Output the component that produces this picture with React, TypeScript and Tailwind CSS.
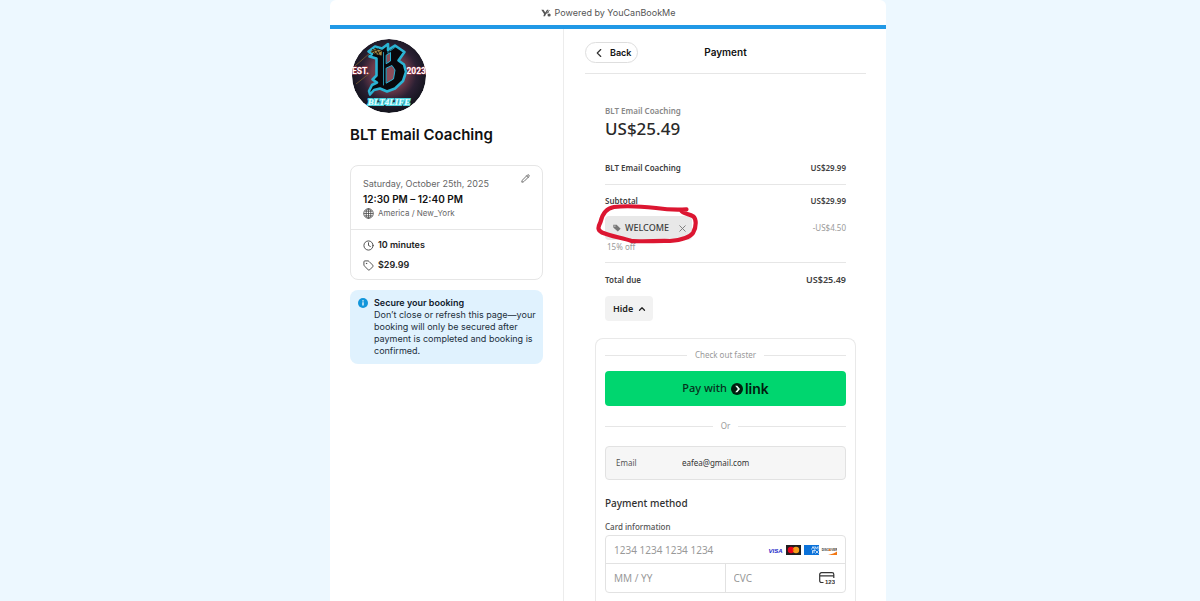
import type { ReactNode } from "react";
import { ChevronLeft, ChevronUp, Clock, Pencil, Tag, X } from "lucide-react";

// Booking page, payment step: the booking summary on the left, the checkout
// form on the right.

const BOOKING = {
  title: "BLT Email Coaching",
  date: "Saturday, October 25th, 2025",
  time: "12:30 PM – 12:40 PM",
  zone: "America / New_York",
  length: "10 minutes",
  price: "$29.99",
};

function BrandMark() {
  return (
    <svg viewBox="0 0 10 8" className="h-2 w-2.5" aria-hidden="true">
      <path d="M.3.8h2.200L4.300 3.600 6 .8h1.500L4.800 5.500 4 7.200H2.300l.8-2.200z" fill="#555" />
      <path d="M6.300 3.600 8.500 1M5.500 4.500 8 2.800" stroke="#555" strokeWidth=".9" />
      <circle cx="8.100" cy="6" r="1.600" fill="#555" />
    </svg>
  );
}

function Logo() {
  return (
    <svg viewBox="0 0 74 74" className="size-[74px] rounded-full" role="img" aria-label="BLT4LIFE">
      <defs>
        <radialGradient id="glow" cx="50%" cy="46%" r="52%">
          <stop offset="0%" stopColor="#8d4a58" />
          <stop offset="45%" stopColor="#6b3a4a" />
          <stop offset="72%" stopColor="#2b2033" />
          <stop offset="100%" stopColor="#15151f" />
        </radialGradient>
      </defs>
      <circle cx="37" cy="37" r="37" fill="url(#glow)" />
      <path d="M3 27 18 14M4 45 18 34" stroke="#6a5230" strokeWidth="1" />
      <g strokeLinejoin="round" strokeLinecap="round">
        <path
          d="M16.500 12.500 23 7.500 30 9.500 36 5V11L43 6.500 52.500 13 46.500 21.500 52 25.500 54 33 51 42 43 49.500 35 52.500 28 49.500 22 51 18 55.500 17 52 20 46 25 43.500 20.500 40.500 24.500 36.500V19.500L17.500 17.500 20 15z"
          fill="#08080c"
          stroke="#2bb3d3"
          strokeWidth="2.600"
        />
        <path
          d="M34.500 16 38.500 13.500V22L34.500 24.500zM34.500 29 40 26.500 43 31 41.500 40 34.500 44z"
          fill="#8a4d59"
          stroke="#2bb3d3"
          strokeWidth="1"
        />
        <path d="M31.500 13.500V46M36 6 36 14M38 12 43.500 8" stroke="#2bb3d3" strokeWidth=".8" fill="none" />
        <path d="M18.500 12.500 23.500 9.500 30 12 29.500 16.500 23 15z" fill="#a88b43" />
        <path d="m20.500 10.500 4 5.500m-1-7 4 7.500m-8-3.500 7-3m-4 5 7-3" stroke="#17130e" strokeWidth=".9" />
      </g>
      <g
        fontFamily="Roboto, 'Liberation Sans', sans-serif"
        fontWeight="700"
        fontSize="8.500"
        fill="#fff"
        stroke="#b84359"
        strokeWidth=".8"
        paintOrder="stroke"
      >
        <text x="0" y="34.500">EST.</text>
        <text x="74" y="34.500" textAnchor="end">2023</text>
      </g>
      <text
        x="37"
        y="65.500"
        textAnchor="middle"
        fontFamily="'Liberation Serif', serif"
        fontStyle="italic"
        fontWeight="700"
        fontSize="9"
        fill="#e6fdff"
        stroke="#4bd4df"
        strokeWidth="2"
        paintOrder="stroke"
      >
        BLT4LIFE
      </text>
    </svg>
  );
}

function GlobeIcon() {
  return (
    <svg
      viewBox="0 0 11 11"
      className="size-[11px]"
      fill="none"
      stroke="#4a4a4a"
      strokeWidth=".8"
      aria-hidden="true"
    >
      <circle cx="5.500" cy="5.500" r="4.800" />
      <ellipse cx="5.500" cy="5.500" rx="2.300" ry="4.800" />
      <path d="M5.500.7v9.600M.7 5.500h9.600M1.500 3.200h8M1.500 7.800h8" />
    </svg>
  );
}

function Summary() {
  return (
    <aside className="w-[234px] shrink-0 border-r border-[#ececec] px-5 pt-2.5">
      <div className="pl-0.5">
        <Logo />
      </div>
      <h1 className="mt-3 text-[15px] leading-5 font-semibold text-[#111]">{BOOKING.title}</h1>

      <section className="mt-5 rounded-lg border border-[#e6e6e6]">
        <div className="relative border-b border-[#e6e6e6] px-3 pt-3 pb-2.5">
          <p className="text-[9px] leading-3 text-[#666]">{BOOKING.date}</p>
          <p className="mt-px text-[10px] leading-4 font-semibold text-[#111]">{BOOKING.time}</p>
          <p className="flex items-center gap-1 text-[8px] leading-3 text-[#666]">
            <GlobeIcon />
            {BOOKING.zone}
          </p>
          <button type="button" aria-label="Edit booking" className="absolute top-2 right-3">
            <Pencil className="size-[9px] text-[#444]" />
          </button>
        </div>
        <ul className="space-y-2 px-3 pt-[9px] pb-2 text-[9px] leading-3 font-semibold text-[#222]">
          <li className="flex items-center gap-1">
            <Clock className="size-[11px] text-[#444]" />
            {BOOKING.length}
          </li>
          <li className="flex items-center gap-1">
            <Tag className="size-[11px] text-[#444]" />
            {BOOKING.price}
          </li>
        </ul>
      </section>

      <section className="mt-2.5 flex gap-1.5 rounded-lg bg-[#e0f2fe] py-[7px] pr-1 pl-2 text-[#1c2f3c]">
        <svg viewBox="0 0 10 10" className="mt-px size-2.5 shrink-0" aria-hidden="true">
          <circle cx="5" cy="5" r="5" fill="#1296db" />
          <path d="M5 4.300v3.300M5 2.200v1.200" stroke="#fff" strokeWidth="1.300" />
        </svg>
        <div className="text-[9px] leading-3">
          <h2 className="font-semibold text-[#10202c]">Secure your booking</h2>
          <p>
            Don’t close or refresh this page—your booking will only be secured after payment is
            completed and booking is confirmed.
          </p>
        </div>
      </section>
    </aside>
  );
}

// Marker ring drawn round the coupon chip.
function MarkerRing() {
  return (
    <svg
      viewBox="0 0 120 60"
      className="pointer-events-none absolute -top-[17px] -left-[15px] h-[60px] w-[120px]"
      aria-hidden="true"
    >
      <path
        d="M96.500 10.300C88 10.800 76 10.400 66 9C52 7.500 34 6.800 24 8C15 9.500 12 16 10.500 23C8 28 7 31 12 33.500C20 37 33 39 41 41.800C52 43 68 41.500 80 42C92 41 100 38 103 34C107 27 106 20 103.500 17.500C99 14.500 93 15 91 11.500"
        fill="none"
        stroke="#dc1631"
        strokeWidth="4.200"
        strokeLinecap="round"
        strokeLinejoin="round"
      />
    </svg>
  );
}

function Row({ label, children }: { label: string; children: ReactNode }) {
  return (
    <div className="flex items-center justify-between leading-4 font-semibold text-[#404040]">
      <span>{label}</span>
      <span>{children}</span>
    </div>
  );
}

function OrderSummary() {
  return (
    <section className="px-5 pt-[31px] text-[8px]">
      <p className="leading-3 font-semibold text-[#888]">{BOOKING.title}</p>
      <p className="text-[17px] leading-6 font-medium text-[#2a2a2a]">US$25.49</p>
      <div className="mt-[19px] border-b border-[#e6e6e6] pb-2">
        <Row label={BOOKING.title}>US$29.99</Row>
      </div>
      <div className="border-b border-[#e6e6e6] pt-2 pb-[9px]">
        <Row label="Subtotal">US$29.99</Row>
        <div className="relative mt-[7px] flex items-center justify-between">
          <span className="flex h-6 items-center gap-1 rounded-sm bg-[#e8e8e8] pr-1 pl-2 font-semibold text-[#404040]">
            <svg viewBox="0 0 8 8" className="size-2" aria-hidden="true">
              <path d="M.3.7h3.300l4 4-2.800 2.900-4.500-4z" fill="#777" />
              <circle cx="1.900" cy="2.100" r=".7" fill="#e8e8e8" />
            </svg>
            <span className="text-[9px] font-medium">WELCOME</span>
            <button type="button" aria-label="Remove coupon" className="ml-1">
              <X className="size-[11px] text-[#777]" />
            </button>
          </span>
          <span className="text-[#999]">-US$4.50</span>
          <MarkerRing />
        </div>
        <p className="mt-px pl-0.5 leading-3 text-[#999]">15% off</p>
      </div>
      <div className="flex items-center justify-between pt-[9px] leading-4 font-semibold text-[#404040]">
        <span>Total due</span>
        <span className="text-[9px]">US$25.49</span>
      </div>
      <button
        type="button"
        className="mt-2 flex h-[25px] items-center gap-1 rounded-sm bg-[#f2f2f2] pr-1.5 pl-2 font-semibold text-[#222]"
      >
        <span className="text-[9px]">Hide</span>
        <ChevronUp className="size-2.5" strokeWidth={3} />
      </button>
    </section>
  );
}

function Divider({ children }: { children: ReactNode }) {
  return (
    <div className="flex items-center gap-1 text-[8px] leading-3 text-[#999] before:h-px before:flex-1 before:bg-[#e6e6e6] after:h-px after:flex-1 after:bg-[#e6e6e6]">
      <span className="px-1">{children}</span>
    </div>
  );
}

function CardBrands() {
  return (
    <svg viewBox="0 0 69 10" className="h-2.5 w-[69px] shrink-0" aria-hidden="true">
      <text
        x="7.500"
        y="7.500"
        textAnchor="middle"
        fontFamily="'Liberation Sans', sans-serif"
        fontSize="6"
        fontStyle="italic"
        fontWeight="700"
        fill="#1a1fc8"
      >
        VISA
      </text>
      <rect x="18" width="15" height="10" fill="#211f20" />
      <circle cx="23" cy="5" r="3.200" fill="#eb001b" />
      <circle cx="28" cy="5" r="3.200" fill="#f79e1b" />
      <path d="M25.500 3a3.200 3.200 0 0 1 0 4 3.200 3.200 0 0 1 0-4z" fill="#ff5f00" />
      <rect x="36" width="15" height="10" fill="#0b72d9" />
      <path
        d="m43.500 4.500 1.500-3 1.500 3M47 4.500v-3l1.500 2 1.500-2v3M44.500 8.500v-3h3M44.500 7h2.500M47.500 5.500l3 3M50.500 5.500l-3 3"
        fill="none"
        stroke="#e8f3ff"
        strokeWidth=".8"
      />
      <text
        x="61.500"
        y="6"
        textAnchor="middle"
        fontFamily="'Liberation Sans', sans-serif"
        fontSize="3"
        fontWeight="700"
        fill="#333"
      >
        DISCOVER
      </text>
      <circle cx="61.500" cy="5" r="1.100" fill="#f27712" />
      <path d="M69 6.500V10h-9c4-.8 7-2 9-3.500z" fill="#f27712" />
    </svg>
  );
}

function CvcIcon() {
  return (
    <svg viewBox="0 0 16 12" className="mr-2.5 h-3 w-4 shrink-0" aria-hidden="true">
      <path
        d="M4.500 10.500H2.500a1.800 1.800 0 0 1-1.800-1.800V2.500A1.800 1.800 0 0 1 2.500.7h10.500a1.800 1.800 0 0 1 1.800 1.800V6M.7 3.800h14.100"
        fill="none"
        stroke="#333"
        strokeWidth="1.200"
      />
      <text
        x="16"
        y="11.500"
        textAnchor="end"
        fontFamily="'Liberation Sans', sans-serif"
        fontSize="6"
        fontWeight="700"
        fill="#333"
      >
        123
      </text>
    </svg>
  );
}

const inputClass =
  "h-[27px] w-full min-w-0 bg-transparent px-2 text-[10px] text-[#333] outline-none placeholder:text-[#999]";

function PaymentForm() {
  return (
    <form className="mx-2.5 mt-[17px] flex-1 rounded-t-lg border border-b-0 border-[#e9e9e9] px-[9px] pt-2.5">
      <Divider>Check out faster</Divider>
      <button
        type="button"
        className="mt-2.5 flex h-[35px] w-full items-center justify-center gap-1 rounded-sm bg-[#00d66f] text-[11px] font-medium text-[#06301c]"
      >
        Pay with
        <svg viewBox="0 0 12 12" className="size-3" aria-hidden="true">
          <circle cx="6" cy="6" r="6" fill="#011e0f" />
          <path d="M4.200 2.800h2.100L9 6 6.300 9.200H4.200L6.900 6z" fill="#e8fff3" />
        </svg>
        <span className="-ml-0.5 font-[Inter] text-[14px] font-semibold text-[#011e0f]">link</span>
      </button>
      <div className="mt-3.5">
        <Divider>Or</Divider>
      </div>
      <div className="mt-3.5 flex h-[34px] items-center rounded-sm border border-[#e2e2e2] bg-[#f6f6f6] px-2.5">
        <label htmlFor="email" className="w-[66px] text-[8px] text-[#555]">
          Email
        </label>
        <input
          id="email"
          type="email"
          defaultValue="eafea@gmail.com"
          className="min-w-0 flex-1 bg-transparent text-[8px] text-[#333] outline-none"
        />
      </div>
      <h2 className="mt-[15px] text-[10px] leading-4 font-medium text-[#303030]">Payment method</h2>
      <fieldset className="mt-2.5">
        <legend className="text-[8px] leading-3 font-medium text-[#555]">Card information</legend>
        <div className="mt-0.5 rounded-sm border border-[#e2e2e2]">
          <div className="flex items-center border-b border-[#e2e2e2] pr-2">
            <input aria-label="Card number" placeholder="1234 1234 1234 1234" className={inputClass} />
            <CardBrands />
          </div>
          <div className="flex">
            <div className="w-1/2 border-r border-[#e2e2e2]">
              <input aria-label="Expiry date" placeholder="MM / YY" className={inputClass} />
            </div>
            <div className="flex w-1/2 items-center">
              <input aria-label="Security code" placeholder="CVC" className={inputClass} />
              <CvcIcon />
            </div>
          </div>
        </div>
      </fieldset>
    </form>
  );
}

export default function App() {
  return (
    <div className="flex min-h-screen bg-[#edf8ff] pl-4 font-[Inter,sans-serif]">
      <div className="mx-auto flex w-full max-w-[556px] flex-col rounded-t-md bg-white">
        <header className="flex h-[29px] items-center justify-center gap-1 border-b-4 border-[#2199e6] text-[9px] text-[#555]">
          <BrandMark />
          Powered by YouCanBookMe
        </header>
        <div className="flex flex-1">
          <Summary />
          <main className="flex min-w-0 flex-1 flex-col pt-[13px] pr-5 pl-[21px]">
            <div className="grid grid-cols-3 items-center border-b border-[#e6e6e6] pb-2.5">
              <button
                type="button"
                className="flex h-[21px] items-center gap-1 justify-self-start rounded-full border border-[#dedede] px-1.5 text-[9px] font-semibold text-[#111]"
              >
                <ChevronLeft className="size-3.5 text-[#333]" />
                Back
              </button>
              <h2 className="text-center text-[10px] font-semibold text-[#111]">Payment</h2>
            </div>
            <div className="flex flex-1 flex-col font-['Noto_Sans',sans-serif]">
              <OrderSummary />
              <PaymentForm />
            </div>
          </main>
        </div>
      </div>
    </div>
  );
}
